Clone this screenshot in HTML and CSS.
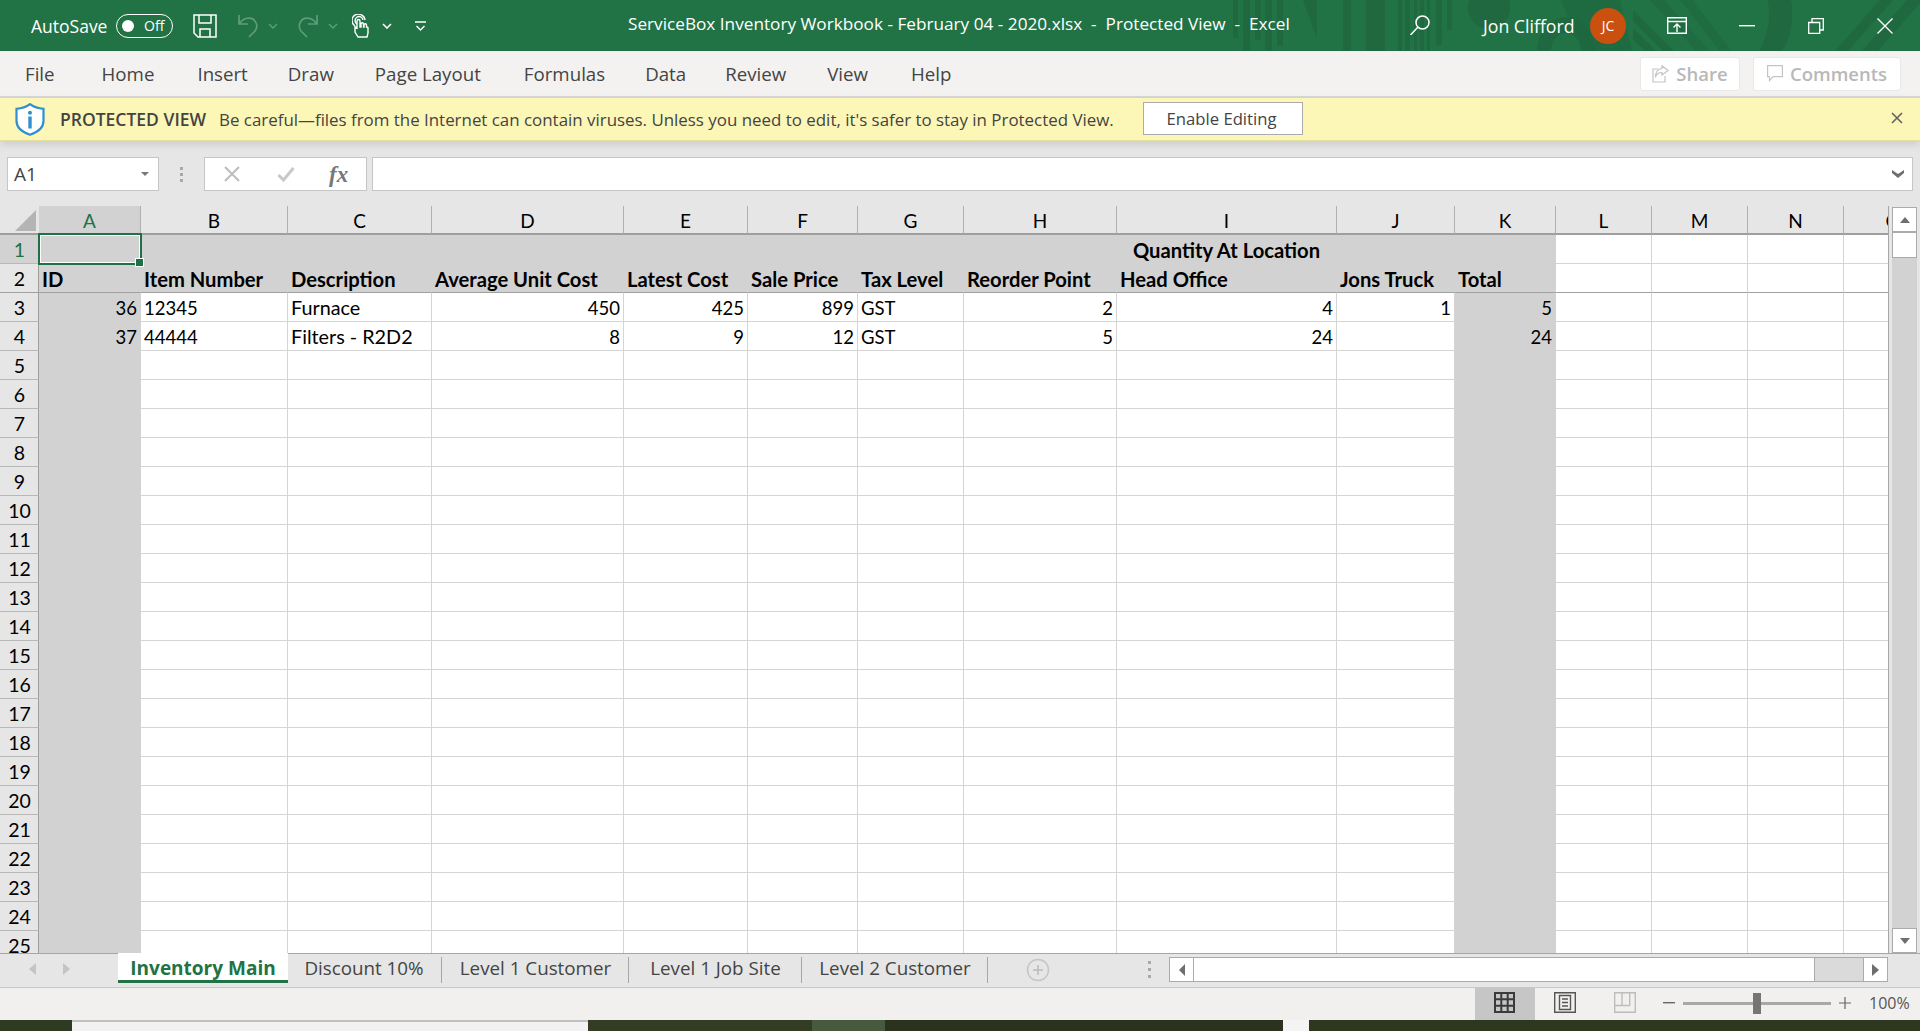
FILE: index.html
```html
<!DOCTYPE html>
<html lang="en">
<head>
<meta charset="utf-8">
<title>ServiceBox Inventory Workbook - Excel</title>
<link rel="stylesheet" href="styles.css">
</head>
<body>
<div class="app">
  <header class="titlebar">
    <svg class="pattern" viewBox="0 0 1920 51" width="1920" height="51" aria-hidden="true">
      <g fill="#1f6840">
        <rect x="1233" y="0" width="5" height="38"/><rect x="1243" y="0" width="7" height="51"/><rect x="1255" y="0" width="6" height="40"/><rect x="1265" y="0" width="7" height="51"/><rect x="1277" y="0" width="6" height="46"/>
        <path d="M1303 0h14v38z"/>
        <rect x="1343" y="0" width="8" height="51"/><rect x="1366" y="0" width="19" height="51"/>
        <rect x="1398" y="0" width="4" height="51"/><rect x="1405" y="0" width="5" height="51"/><rect x="1414" y="0" width="3" height="51"/><rect x="1420" y="0" width="4" height="51"/><rect x="1427" y="0" width="3" height="51"/><rect x="1436" y="0" width="6" height="45"/><rect x="1447" y="0" width="5" height="30"/>
        <path d="M1470 0h40a21 21 0 0 1-40 0z"/>
        <circle cx="1489" cy="8" r="21"/>
        <path d="M1537 51a29 34 0 0 1 58 0h-14a15 18 0 0 0-30 0z"/>
        <path d="M1560 0h60l12 51h-46z" opacity=".75"/>
        <path d="M1768 0h23c3 18 1 36-9 51h-23c9-15 12-33 9-51z"/>
        <path d="M1633 10l41 41h-11l-30-30zM1633 28l23 23h-11l-12-12z"/>
        <path d="M1650 0h14l46 51h-14zM1680 0h12l40 51h-12z" opacity=".7"/>
        <path d="M1835 51l45-51h13l-45 51zM1862 51l45-51h13v3l-42 48z"/>
      </g>
    </svg>
    <div class="qat">
      <span class="autosave">AutoSave</span>
      <span class="toggle"><span class="knob"></span><span class="off">Off</span></span>
      <svg class="ic-save" viewBox="0 0 24 24" width="24" height="24" fill="none" stroke="#fff" stroke-width="1.5"><path d="M1 1h22v22H5l-4-4zM6 1v8h12V1M7 23v-8h10v8"/></svg>
      <svg class="ic-undo" viewBox="0 0 22 24" width="22" height="24" fill="none" stroke="#5f9c7c" stroke-width="1.7"><path d="M2 1v9h9M2 10C6 4 12 3 16 5c4 3 5 8 2 12l-6 6"/></svg>
      <svg class="ic-small" viewBox="0 0 10 6" width="10" height="6" fill="none" stroke="#5f9c7c" stroke-width="1.4"><path d="M1 1l4 4 4-4"/></svg>
      <svg class="ic-redo" viewBox="0 0 22 24" width="22" height="24" fill="none" stroke="#5f9c7c" stroke-width="1.7"><path d="M20 1v9h-9M20 10C16 4 10 3 6 5c-4 3-5 8-2 12l6 6"/></svg>
      <svg class="ic-small" viewBox="0 0 10 6" width="10" height="6" fill="none" stroke="#5f9c7c" stroke-width="1.4"><path d="M1 1l4 4 4-4"/></svg>
      <svg class="ic-touch" viewBox="0 0 18 24" width="18" height="24" fill="none" stroke="#fff" stroke-width="1.4"><path d="M3 12a6.5 6.5 0 1 1 10-6M5 10a4 4 0 1 1 6-4"/><path d="M6 23l-3-5V13l2 1V7a1.4 1.4 0 0 1 3 0v6h1V10a1.2 1.2 0 0 1 2.5 0v3h.5v-2a1.2 1.2 0 0 1 2.5 0v2a1.2 1.2 0 0 1 1.5 1v5l-1 4z"/></svg>
      <svg class="ic-chev" viewBox="0 0 10 6" width="10" height="6" fill="none" stroke="#fff" stroke-width="1.6"><path d="M1 1l4 4 4-4"/></svg>
      <svg class="ic-cust" viewBox="0 0 11 10" width="11" height="10" fill="none" stroke="#fff" stroke-width="1.4"><path d="M0 1h11M1.500 5l4 4 4-4"/></svg>
    </div>
    <div class="doc-title">ServiceBox Inventory Workbook - February 04 - 2020.xlsx&nbsp; -&nbsp; Protected View&nbsp; -&nbsp; Excel</div>
    <div class="win">
      <svg class="ic-search" viewBox="0 0 20 20" width="20" height="20" fill="none" stroke="#fff" stroke-width="1.5"><circle cx="12.500" cy="7.500" r="6.500"/><path d="M8 12l-7.500 8"/></svg>
      <span class="user">Jon Clifford</span>
      <span class="avatar">JC</span>
      <svg class="ic-display" viewBox="0 0 20 17" width="20" height="17" fill="none" stroke="#fff" stroke-width="1.4"><path d="M.7.7h18.600v15.600H.7zM.7 4.500h18.600M10 15V7M6.500 10.500L10 7l3.500 3.500"/></svg>
      <svg class="ic-min" viewBox="0 0 16 2" width="16" height="2"><rect width="16" height="1.400" fill="#fff"/></svg>
      <svg class="ic-restore" viewBox="0 0 16 16" width="16" height="16" fill="none" stroke="#fff" stroke-width="1.3"><path d="M.7 4.500h11v11H.7zM4 4.500V.7h11.300V12h-3.600"/></svg>
      <svg class="ic-close" viewBox="0 0 16 16" width="16" height="16" fill="none" stroke="#fff" stroke-width="1.4"><path d="M.5.500l15 15M15.500.500l-15 15"/></svg>
    </div>
  </header>

  <nav class="ribbon">
    <span class="rtab">File</span><span class="rtab">Home</span><span class="rtab">Insert</span><span class="rtab">Draw</span><span class="rtab">Page Layout</span><span class="rtab">Formulas</span><span class="rtab">Data</span><span class="rtab">Review</span><span class="rtab">View</span><span class="rtab">Help</span>
    <div class="ribbon-actions">
      <button class="ghost share"><svg viewBox="0 0 17 18" width="17" height="18" fill="none" stroke="#c4c4c4" stroke-width="1.200"><path d="M10 .8l6 4.700-6 4.500V7.500C6 7.500 4 10 3.500 12.500 3.500 7 6 3.800 10 3.500zM6 4H1v13h12v-6"/></svg>Share</button>
      <button class="ghost comments"><svg viewBox="0 0 16 17" width="16" height="17" fill="none" stroke="#c4c4c4" stroke-width="1.200"><path d="M.6.600h14.800v11H6l-3.500 4v-4H.6z"/></svg>Comments</button>
    </div>
  </nav>

  <div class="msgbar">
    <svg class="shield" viewBox="0 0 30 33" width="30" height="33"><path d="M15 1.200c4 3 8 4.300 13.500 4.600v12c0 7-6 11.500-13.500 14C7.500 29.300 1.500 24.800 1.500 17.800v-12C7 5.500 11 4.200 15 1.200z" fill="#fff" stroke="#2f8fd0" stroke-width="2.200"/><circle cx="15" cy="9.800" r="2" fill="#2f8fd0"/><rect x="13.300" y="13.500" width="3.400" height="12" fill="#2f8fd0"/></svg>
    <strong class="msg-head">PROTECTED VIEW</strong>
    <span class="msg-text">Be careful—files from the Internet can contain viruses. Unless you need to edit, it's safer to stay in Protected View.</span>
    <button class="enable">Enable Editing</button>
    <svg class="msg-close" viewBox="0 0 12 12" width="12" height="12" fill="none" stroke="#666" stroke-width="1.700"><path d="M1 1l10 10M11 1L1 11"/></svg>
  </div>

  <div class="formula">
    <div class="namebox"><span>A1</span><svg viewBox="0 0 8 4" width="8" height="4"><path d="M0 0h8L4 4z" fill="#777"/></svg></div>
    <div class="fdots"><i></i><i></i><i></i></div>
    <div class="fbtns">
      <svg viewBox="0 0 16 16" width="16" height="16" fill="none" stroke="#bdbdbd" stroke-width="2"><path d="M1 1l14 14M15 1L1 15"/></svg>
      <svg viewBox="0 0 18 16" width="18" height="16" fill="none" stroke="#c8c8c8" stroke-width="3"><path d="M1.500 9l5 5L16.500 2"/></svg>
      <span class="fx">fx</span>
    </div>
    <div class="finput"><svg viewBox="0 0 12 8" width="12" height="8"><path d="M0 0l6 4 6-4v3L6 8 0 3z" fill="#6e6e6e"/></svg></div>
  </div>

  <div class="workspace">
    <div class="grid-view">
      <table class="sheet">
        <colgroup>
          <col class="c-row"><col class="c-a shade"><col class="c-b"><col class="c-c"><col class="c-d"><col class="c-e"><col class="c-f"><col class="c-g"><col class="c-h"><col class="c-i"><col class="c-j"><col class="c-k shade"><col class="c-l"><col class="c-m"><col class="c-n"><col class="c-o">
        </colgroup>
        <thead>
          <tr><th class="corner"><span class="tri"></span></th><th class="on">A</th><th>B</th><th>C</th><th>D</th><th>E</th><th>F</th><th>G</th><th>H</th><th>I</th><th>J</th><th>K</th><th>L</th><th>M</th><th>N</th><th>O</th></tr>
        </thead>
        <tbody>
          <tr class="band"><th class="on">1</th><td class="sel"><span class="selbox"></span></td><td></td><td></td><td></td><td></td><td></td><td></td><td></td><td class="ctr b">Quantity At Location</td><td></td><td></td><td class="w"></td><td class="w"></td><td class="w"></td><td class="w"></td></tr>
          <tr class="band hd"><th>2</th><td>ID</td><td>Item Number</td><td>Description</td><td>Average Unit Cost</td><td>Latest Cost</td><td>Sale Price</td><td>Tax Level</td><td>Reorder Point</td><td>Head Office</td><td>Jons Truck</td><td>Total</td><td class="w"></td><td class="w"></td><td class="w"></td><td class="w"></td></tr>
          <tr><th>3</th><td class="n">36</td><td class="code">12345</td><td>Furnace</td><td class="n">450</td><td class="n">425</td><td class="n">899</td><td class="code">GST</td><td class="n">2</td><td class="n">4</td><td class="n">1</td><td class="n">5</td><td></td><td></td><td></td><td></td></tr>
          <tr><th>4</th><td class="n">37</td><td class="code">44444</td><td>Filters - R2D2</td><td class="n">8</td><td class="n">9</td><td class="n">12</td><td class="code">GST</td><td class="n">5</td><td class="n">24</td><td></td><td class="n">24</td><td></td><td></td><td></td><td></td></tr>
          <tr><th>5</th><td></td><td></td><td></td><td></td><td></td><td></td><td></td><td></td><td></td><td></td><td></td><td></td><td></td><td></td><td></td></tr>
          <tr><th>6</th><td></td><td></td><td></td><td></td><td></td><td></td><td></td><td></td><td></td><td></td><td></td><td></td><td></td><td></td><td></td></tr>
          <tr><th>7</th><td></td><td></td><td></td><td></td><td></td><td></td><td></td><td></td><td></td><td></td><td></td><td></td><td></td><td></td><td></td></tr>
          <tr><th>8</th><td></td><td></td><td></td><td></td><td></td><td></td><td></td><td></td><td></td><td></td><td></td><td></td><td></td><td></td><td></td></tr>
          <tr><th>9</th><td></td><td></td><td></td><td></td><td></td><td></td><td></td><td></td><td></td><td></td><td></td><td></td><td></td><td></td><td></td></tr>
          <tr><th>10</th><td></td><td></td><td></td><td></td><td></td><td></td><td></td><td></td><td></td><td></td><td></td><td></td><td></td><td></td><td></td></tr>
          <tr><th>11</th><td></td><td></td><td></td><td></td><td></td><td></td><td></td><td></td><td></td><td></td><td></td><td></td><td></td><td></td><td></td></tr>
          <tr><th>12</th><td></td><td></td><td></td><td></td><td></td><td></td><td></td><td></td><td></td><td></td><td></td><td></td><td></td><td></td><td></td></tr>
          <tr><th>13</th><td></td><td></td><td></td><td></td><td></td><td></td><td></td><td></td><td></td><td></td><td></td><td></td><td></td><td></td><td></td></tr>
          <tr><th>14</th><td></td><td></td><td></td><td></td><td></td><td></td><td></td><td></td><td></td><td></td><td></td><td></td><td></td><td></td><td></td></tr>
          <tr><th>15</th><td></td><td></td><td></td><td></td><td></td><td></td><td></td><td></td><td></td><td></td><td></td><td></td><td></td><td></td><td></td></tr>
          <tr><th>16</th><td></td><td></td><td></td><td></td><td></td><td></td><td></td><td></td><td></td><td></td><td></td><td></td><td></td><td></td><td></td></tr>
          <tr><th>17</th><td></td><td></td><td></td><td></td><td></td><td></td><td></td><td></td><td></td><td></td><td></td><td></td><td></td><td></td><td></td></tr>
          <tr><th>18</th><td></td><td></td><td></td><td></td><td></td><td></td><td></td><td></td><td></td><td></td><td></td><td></td><td></td><td></td><td></td></tr>
          <tr><th>19</th><td></td><td></td><td></td><td></td><td></td><td></td><td></td><td></td><td></td><td></td><td></td><td></td><td></td><td></td><td></td></tr>
          <tr><th>20</th><td></td><td></td><td></td><td></td><td></td><td></td><td></td><td></td><td></td><td></td><td></td><td></td><td></td><td></td><td></td></tr>
          <tr><th>21</th><td></td><td></td><td></td><td></td><td></td><td></td><td></td><td></td><td></td><td></td><td></td><td></td><td></td><td></td><td></td></tr>
          <tr><th>22</th><td></td><td></td><td></td><td></td><td></td><td></td><td></td><td></td><td></td><td></td><td></td><td></td><td></td><td></td><td></td></tr>
          <tr><th>23</th><td></td><td></td><td></td><td></td><td></td><td></td><td></td><td></td><td></td><td></td><td></td><td></td><td></td><td></td><td></td></tr>
          <tr><th>24</th><td></td><td></td><td></td><td></td><td></td><td></td><td></td><td></td><td></td><td></td><td></td><td></td><td></td><td></td><td></td></tr>
          <tr><th>25</th><td></td><td></td><td></td><td></td><td></td><td></td><td></td><td></td><td></td><td></td><td></td><td></td><td></td><td></td><td></td></tr>
        </tbody>
      </table>
    </div>
    <div class="vscroll">
      <div class="sbtn"><svg viewBox="0 0 10 6" width="10" height="6"><path d="M5 0l5 6H0z" fill="#6e6e6e"/></svg></div>
      <div class="vthumb"></div>
      <div class="vtrack"></div>
      <div class="sbtn"><svg viewBox="0 0 10 6" width="10" height="6"><path d="M0 0h10L5 6z" fill="#6e6e6e"/></svg></div>
    </div>
  </div>

  <div class="tabbar">
    <div class="tabnav">
      <svg viewBox="0 0 7 12" width="7" height="12"><path d="M7 0v12L0 6z" fill="#c4c4c4"/></svg>
      <svg viewBox="0 0 7 12" width="7" height="12"><path d="M0 0v12l7-6z" fill="#c4c4c4"/></svg>
    </div>
    <div class="tabs">
      <span class="tab active">Inventory Main</span>
      <span class="tab t2">Discount 10%</span>
      <span class="tab t3">Level 1 Customer</span>
      <span class="tab t4">Level 1 Job Site</span>
      <span class="tab t5">Level 2 Customer</span>
    </div>
    <svg class="addsheet" viewBox="0 0 24 24" width="24" height="24" fill="none" stroke="#c6c6c6" stroke-width="1.500"><circle cx="12" cy="12" r="10.500"/><path d="M12 7v10M7 12h10" stroke="#bbb"/></svg>
    <div class="tdots"><i></i><i></i><i></i></div>
    <div class="hscroll">
      <div class="hbtn"><svg viewBox="0 0 6 12" width="6" height="12"><path d="M6 0v12L0 6z" fill="#6e6e6e"/></svg></div>
      <div class="hthumb"></div>
      <div class="htrack"></div>
      <div class="hbtn"><svg viewBox="0 0 7 12" width="7" height="12"><path d="M0 0v12l7-6z" fill="#6e6e6e"/></svg></div>
    </div>
  </div>

  <footer class="status">
    <div class="view on"><svg viewBox="0 0 21 21" width="21" height="21" fill="none" stroke="#3a3a3a" stroke-width="2"><path d="M1 1h19v19H1zM7.300 1v19M13.700 1v19M1 7.300h19M1 13.700h19"/></svg></div>
    <div class="view"><svg viewBox="0 0 22 21" width="22" height="21" fill="none" stroke="#555" stroke-width="1.400"><path d="M.7.7h20.600v19.600H.7zM5.500 3.500h11v14h-11zM8 7h6M8 10.500h6M8 14h6"/></svg></div>
    <div class="view"><svg viewBox="0 0 22 21" width="22" height="21" fill="none" stroke="#bdbdbd" stroke-width="1.400"><path d="M.7.700h20.600v19.600H.7zM.7 13.500h15V.7M8 .7v12.800"/></svg></div>
    <div class="zoomctl">
      <svg class="zminus" viewBox="0 0 12 2" width="12" height="2"><rect width="12" height="1.400" fill="#666"/></svg>
      <div class="slider"><span class="sthumb"></span></div>
      <svg class="zplus" viewBox="0 0 12 12" width="12" height="12" fill="none" stroke="#666" stroke-width="1.200"><path d="M6 0v12M0 6h12"/></svg>
      <span class="zoomval">100%</span>
    </div>
  </footer>

  <div class="desktop">
    <span class="d d1"></span><span class="d d2"></span><span class="d d3"></span><span class="d d4"></span><span class="d d5"></span><span class="d d6"></span><span class="d d7"><span class="clock">3:03 PM</span></span>
  </div>
</div>
</body>
</html>
```
FILE: styles.css
```css
* { box-sizing: border-box; }
html, body { margin: 0; height: 100%; overflow: hidden; }
body { font-family: "Open Sans", "Noto Sans", sans-serif; color: #444; background: #e6e6e6; }
button { font: inherit; }
.app { width: 1920px; height: 1031px; display: flex; flex-direction: column; }

/* title bar */
.titlebar { position: relative; height: 51px; flex: none; background: #217346; color: #fff; display: flex; align-items: center; overflow: hidden; }
.pattern { position: absolute; left: 0; top: 0; }
.qat { position: relative; width: 628px; flex: none; display: flex; align-items: center; padding-left: 31px; }
.autosave { font-size: 17.500px; width: 85px; white-space: nowrap; }
.toggle { width: 57px; height: 24px; border: 1.5px solid #fff; border-radius: 12px; display: flex; align-items: center; padding-left: 5px; }
.knob { width: 12px; height: 12px; border-radius: 50%; background: #fff; }
.off { font-size: 14px; margin-left: 10px; }
.ic-save { margin-left: 20px; }
.ic-undo { margin-left: 20px; }
.ic-small { margin-left: 9px; }
.ic-redo { margin-left: 19px; }
.ic-touch { margin-left: 14px; }
.ic-chev { margin-left: 12px; }
.ic-cust { margin-left: 23px; }
.doc-title { position: relative; font-size: 17.200px; white-space: nowrap; margin-top: -4px; }
.win { position: absolute; left: 1410px; top: 0; height: 51px; display: flex; align-items: center; }
.ic-search { margin-top: -1px; }
.user { font-size: 17.700px; margin-left: 53px; width: 90px; white-space: nowrap; }
.avatar { width: 36px; height: 36px; margin-left: 17px; border-radius: 50%; background: #ca5010; display: flex; align-items: center; justify-content: center; font-size: 14px; }
.ic-display { margin-left: 41px; }
.ic-min { margin-left: 52px; }
.ic-restore { margin-left: 53px; }
.ic-close { margin-left: 53px; }

/* ribbon */
.ribbon { height: 47px; flex: none; background: #f3f2f1; border-bottom: 2px solid #d8d8d8; display: flex; align-items: center; padding-left: 25px; gap: 42px; position: relative; }
.rtab { font-size: 18.700px; color: #444; white-space: nowrap; }
.rtab:nth-child(1) { margin-right: 5px; }
.rtab:nth-child(2) { margin-right: 1px; }
.rtab:nth-child(3) { margin-right: -2px; }
.rtab:nth-child(4) { margin-right: -1px; }
.rtab:nth-child(5) { margin-right: 1px; }
.rtab:nth-child(6) { margin-right: -2px; }
.rtab:nth-child(7) { margin-right: -3px; }
.rtab:nth-child(8) { margin-right: -1px; }
.rtab:nth-child(9) { margin-right: 1px; }
.ribbon-actions { margin-left: auto; display: flex; gap: 13px; padding-right: 19px; }
.ghost { height: 34px; background: #fff; border: 1px solid #e8e8e8; border-radius: 3px; color: #b8b8b8; font-weight: 600; font-size: 18.500px; display: flex; align-items: center; justify-content: center; gap: 7px; padding: 0; }
.share { width: 100px; }
.comments { width: 148px; }

/* message bar */
.msgbar { height: 43px; flex: none; background: #fcf7b6; border-bottom: 1px solid #e6e09e; box-shadow: 0 3px 8px rgba(0,0,0,.12); display: flex; align-items: center; position: relative; padding-left: 15px; }
.shield { flex: none; }
.msg-head { font-size: 17.500px; font-weight: 600; color: #444; margin-left: 15px; white-space: nowrap; }
.msg-text { font-size: 16.900px; color: #444; margin-left: 13px; white-space: nowrap; }
.enable { position: absolute; left: 1143px; top: 4px; width: 160px; height: 33px; background: #fff; border: 1px solid #ababab; color: #444; font-size: 16.700px; padding: 0 3px 0 0; }
.msg-close { position: absolute; left: 1891px; top: 14px; }

/* formula bar */
.formula { height: 65px; flex: none; display: flex; align-items: flex-start; padding-top: 16px; padding-left: 7px; background: #e6e6e6; }
.namebox { width: 152px; height: 34px; background: #fff; border: 1px solid #c6c6c6; display: flex; align-items: center; justify-content: space-between; padding: 0 9px 0 6px; font-size: 19px; color: #444; }
.fdots { width: 45px; height: 34px; display: flex; flex-direction: column; align-items: center; justify-content: center; gap: 3px; }
.fdots i, .tdots i { display: block; width: 3px; height: 3px; background: #a8a8a8; }
.fbtns { width: 163px; height: 34px; background: #fff; border: 1px solid #c6c6c6; display: flex; align-items: center; padding-left: 19px; gap: 37px; }
.fx { font-family: "Liberation Serif", serif; font-style: italic; font-weight: 700; font-size: 23px; color: #777; line-height: 1; margin-left: -3px; }
.finput { width: 1541px; height: 34px; margin-left: 5px; background: #fff; border: 1px solid #c6c6c6; display: flex; align-items: center; justify-content: flex-end; padding-right: 8px; }

/* sheet */
.workspace { height: 747px; flex: none; display: flex; background: #e6e6e6; }
.grid-view { width: 1889px; flex: none; overflow: hidden; height: 747px; border-right: 1px solid #a6a6a6; }
.sheet { border-collapse: separate; border-spacing: 0; table-layout: fixed; width: 1943px; font-family: Lato, "Open Sans", sans-serif; font-size: 19.800px; color: #000; background: #fff; }
.c-row { width: 39px; } .c-a { width: 102px; } .c-b { width: 147px; } .c-c { width: 144px; } .c-d { width: 192px; }
.c-e { width: 124px; } .c-f { width: 110px; } .c-g { width: 106px; } .c-h { width: 153px; } .c-i { width: 220px; }
.c-j { width: 118px; } .c-k { width: 101px; } .c-l { width: 96px; } .c-m { width: 96px; } .c-n { width: 96px; } .c-o { width: 99px; }
.shade { background: #d2d2d2; }
.sheet thead th { height: 29px; background: #e6e6e6; font-weight: 400; padding: 2px 0 0; border-bottom: 2px solid #9e9e9e; border-right: 1px solid #b0b0b0; text-align: center; color: #000; font-size: 19px; line-height: 1; }
.sheet thead th.on { background: #d2d2d2; color: #1e7145; }
.sheet thead th.corner { position: relative; background: #e6e6e6; border-right: 0; }
.tri { position: absolute; left: 15px; top: 4px; width: 0; height: 0; border-style: solid; border-width: 0 0 21px 21px; border-color: transparent transparent #b4b4b4 transparent; }
.sheet tbody tr { height: 29px; }
.sheet tbody th { background: #e6e6e6; font-weight: 400; font-size: 19.500px; border-bottom: 1px solid #b8b8b8; border-right: 1px solid #9e9e9e; padding: 2px 0 0 1px; text-align: center; line-height: 1; }
.sheet tbody th.on { background: #d2d2d2; color: #1e7145; }
.sheet td { height: 29px; padding: 2px 3px 0 3px; border-right: 1px solid #d4d4d4; border-bottom: 1px solid #d4d4d4; white-space: nowrap; overflow: hidden; line-height: 1; }
.sheet td:nth-child(2), .sheet td:nth-child(12) { background: #d2d2d2; border-color: #d2d2d2; }
.band td { background: #d2d2d2; border-color: #d2d2d2; }
.band td.w { background: #fff; border-color: #d4d4d4; }
.sheet .hd td { font-weight: 700; font-size: 20.200px; border-bottom: 1px solid #a0a0a0; }
.hd td.w { border-bottom-color: #a0a0a0; }
.sheet tbody .hd th { border-bottom-color: #a0a0a0; }
.sheet .n, .sheet .code { font-size: 18.500px; }
.n { text-align: right; }
.ctr { text-align: center; }
.sheet .b { font-weight: 700; font-size: 20.200px; }
td.sel { position: relative; }
.sheet td.sel { overflow: visible; }
.selbox { position: absolute; left: -1px; top: -2px; width: 104px; height: 32px; border: 2px solid #1e7145; box-shadow: inset 0 0 0 1px #fff; }
.selbox::after { content: ""; position: absolute; right: -4px; bottom: -4px; width: 7px; height: 7px; background: #1e7145; border: 1px solid #fff; }
.vscroll { width: 31px; flex: none; padding: 1px 3px 0; display: flex; flex-direction: column; }
.sbtn { height: 25px; flex: none; background: #fff; border: 1px solid #ababab; display: flex; align-items: center; justify-content: center; }
.vthumb { height: 26px; flex: none; background: #fff; border: 1px solid #ababab; }
.vtrack { flex: 1; background: #d2d2d2; }

/* sheet tabs */
.tabbar { height: 35px; flex: none; background: #e6e6e6; border-top: 1px solid #a6a6a6; border-bottom: 1px solid #c8c8c8; display: flex; position: relative; }
.tabnav { width: 118px; display: flex; align-items: center; gap: 27px; padding-left: 29px; padding-bottom: 3px; }
.tabs { display: flex; height: 30px; margin-top: -1px; }
.tab { font-size: 18.800px; color: #444; display: flex; align-items: center; justify-content: center; position: relative; white-space: nowrap; }
.tab::after { content: ""; position: absolute; right: 0; top: 4px; bottom: 0; width: 1px; background: #a6a6a6; }
.active { width: 170px; background: #fff; color: #217346; font-weight: 700; font-size: 19px; border-bottom: 3px solid #217346; padding-top: 2px; }
.active::after { display: none; }
.t2 { width: 154px; padding-right: 2px; } .t3 { width: 187px; } .t4 { width: 173px; } .t5 { width: 186px; }
.addsheet { margin: 4px 0 0 38px; }
.tdots { width: 3px; margin: 0 0 0 98px; display: flex; flex-direction: column; justify-content: center; gap: 4px; padding-bottom: 2px; }
.hscroll { display: flex; height: 25px; margin: 3px 0 0 18px; border-top: 1px solid #ababab; border-bottom: 1px solid #ababab; }
.hbtn { width: 25px; background: #fff; border: 1px solid #ababab; margin: -1px 0; display: flex; align-items: center; justify-content: center; }
.hthumb { width: 621px; background: #fff; border-right: 1px solid #ababab; }
.htrack { width: 48px; background: #dadada; }

/* status bar */
.status { height: 32px; flex: none; background: #f1f0ee; display: flex; align-items: stretch; padding-left: 1475px; }
.view { width: 60px; padding-bottom: 3px; display: flex; align-items: center; justify-content: center; }
.view.on { background: #c6c6c6; padding-right: 2px; }
.zoomctl { display: flex; align-items: center; padding-bottom: 2px; }
.zminus { margin-left: 8px; }
.slider { width: 148px; height: 3px; margin-left: 8px; background: #a8a8a8; position: relative; }
.sthumb { position: absolute; left: 70px; top: -9px; width: 8px; height: 21px; background: #757575; }
.zplus { margin-left: 8px; }
.zoomval { font-size: 16px; color: #555; margin-left: 18px; }

/* desktop */
.desktop { height: 11px; flex: none; display: flex; background: #2c3520; overflow: hidden; }
.d { height: 11px; flex: none; display: block; position: relative; }
.d1 { width: 72px; background: #2e3a22; }
.d2 { width: 516px; background: #f2f2f2; border-top: 2px solid #c0c0c0; }
.d3 { width: 224px; background: #333c24; }
.d4 { width: 73px; background: #475a40; }
.d5 { width: 398px; background: #2b331e; }
.d6 { width: 26px; background: #f4f4f4; }
.d7 { width: 611px; background: #2e3820; }
.clock { position: absolute; left: 442px; top: 7px; font-size: 15px; line-height: 20px; color: #fff; }
```
